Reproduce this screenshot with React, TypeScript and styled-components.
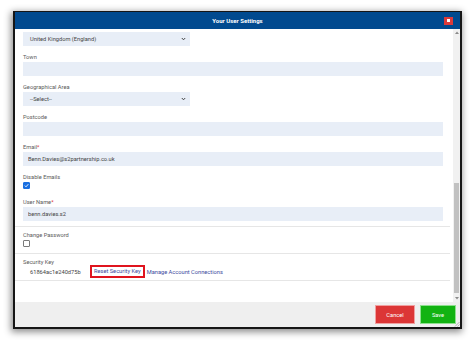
import React from 'react'
import styled, { createGlobalStyle } from 'styled-components'

const GlobalStyle = createGlobalStyle`
  html, body {
    margin: 0;
    padding: 0;
    background: #fff;
  }
  body {
    font-family: Roboto, 'Liberation Sans', Arial, sans-serif;
  }
`

const Page = styled.div`
  width: 474px;
  height: 342px;
  padding: 11px 0 0 13px;
  box-sizing: border-box;
`

const Dialog = styled.div`
  width: 449px;
  height: 318px;
  box-sizing: border-box;
  border: 2px solid #161616;
  border-top-width: 1px;
  background: #fff;
  display: flex;
  flex-direction: column;
  box-shadow: -1px 2px 7px 1px rgba(0, 0, 0, 0.45);
  position: relative;
`

const Header = styled.div`
  height: 17px;
  flex: none;
  background: #014a8f;
  display: grid;
  grid-template-columns: 1fr auto 1fr;
  align-items: center;
`

const Title = styled.div`
  grid-column: 2;
  color: #fff;
  font-size: 6px;
  font-weight: 700;
`

const CloseButton = styled.button`
  grid-column: 3;
  justify-self: end;
  margin-right: 7px;
  width: 9px;
  height: 8px;
  padding: 0;
  border: none;
  background: #dc3a3a;
  display: flex;
  align-items: center;
  justify-content: center;
`

const Body = styled.div`
  flex: 1;
  min-height: 0;
  display: flex;
`

const Scroller = styled.div`
  flex: 1;
  overflow: hidden;
  margin-right: 3px;
`

const Section = styled.div<{ $pad: string }>`
  display: flex;
  flex-direction: column;
  gap: 7px;
  padding: ${({ $pad }) => $pad};
  border-bottom: 1px solid #e6e6e6;
`

const Field = styled.div<{ $after?: number }>`
  display: flex;
  flex-direction: column;
  padding: 0 7px 0 8px;
  margin-bottom: ${({ $after }) => $after || 0}px;
`

const Label = styled.div`
  font-size: 5.7px;
  line-height: 8px;
  height: 8px;
  color: #5a5a5a;
  margin-bottom: 1px;
`

const Required = styled.span`
  color: #e03030;
`

const TextInput = styled.input`
  height: 14px;
  box-sizing: border-box;
  border: none;
  outline: none;
  background: #e8eef7;
  font-family: inherit;
  font-size: 5.7px;
  color: #444;
  padding: 0 5px;
  margin: 0;
  width: 100%;
`

const SelectBox = styled.div`
  width: 167px;
  height: 14px;
  box-sizing: border-box;
  background: #e8eef7;
  display: flex;
  align-items: center;
  justify-content: space-between;
  padding: 0 4px 0 7px;
  font-size: 5.7px;
  color: #444;
`

const Check = styled.div<{ $checked?: boolean }>`
  width: 7px;
  height: 7px;
  box-sizing: border-box;
  border-radius: 1px;
  border: 1px solid ${({ $checked }) => ($checked ? '#1a6fe0' : '#7a7a7a')};
  background: ${({ $checked }) => ($checked ? '#1a6fe0' : '#fff')};
  display: flex;
  align-items: center;
  justify-content: center;
`

const KeyRow = styled.div`
  display: flex;
  align-items: center;
  font-size: 5.7px;
  height: 9px;
`

const KeyValue = styled.span`
  color: #444;
  padding-left: 7px;
  width: 62px;
`

const Link = styled.a<{ $marked?: boolean }>`
  color: #3d4a9e;
  text-decoration: none;
  padding: ${({ $marked }) => ($marked ? '1px 2px 2px' : '0')};
  outline: ${({ $marked }) => ($marked ? '2px solid #e0141e' : 'none')};
  margin-right: ${({ $marked }) => ($marked ? '4px' : '0')};
`

const Scrollbar = styled.div`
  width: 7px;
  flex: none;
  background: #f1f1f1;
  display: flex;
  flex-direction: column;
  align-items: center;
`

const Arrow = styled.div`
  height: 7px;
  flex: none;
  display: flex;
  align-items: center;
  justify-content: center;
`

const Track = styled.div`
  flex: 1;
  width: 100%;
  display: flex;
  flex-direction: column;
  justify-content: flex-end;
`

const Thumb = styled.div`
  height: 110px;
  margin: 0 1px 2px;
  background: #c1c1c1;
`

const Footer = styled.div`
  height: 25px;
  flex: none;
  background: #efefef;
  display: flex;
  justify-content: flex-end;
  align-items: center;
  gap: 5px;
  padding-right: 4px;
`

const ActionButton = styled.button<{ $tone: 'cancel' | 'save' }>`
  height: 19px;
  width: ${({ $tone }) => ($tone === 'cancel' ? '40px' : '36px')};
  border: 1px solid ${({ $tone }) => ($tone === 'cancel' ? '#f0a0a0' : '#8ee08e')};
  background: ${({ $tone }) => ($tone === 'cancel' ? '#dc3636' : '#12b312')};
  color: #fff;
  font-family: inherit;
  font-size: 5.7px;
  padding: 0;
`

const Grip = styled.svg`
  position: absolute;
  right: 0;
  bottom: 0;
`

const Chevron = () => (
  <svg width="5" height="4" viewBox="0 0 5 4">
    <path d="M0.8 1 L2.5 2.8 L4.2 1" stroke="#333" strokeWidth="0.9" fill="none" />
  </svg>
)

const TinyArrow = ({ up }: { up?: boolean }) => (
  <svg width="4" height="3" viewBox="0 0 4 3">
    <path d={up ? 'M0 3 L2 0.5 L4 3 Z' : 'M0 0 L2 2.5 L4 0 Z'} fill="#8a8a8a" />
  </svg>
)

export default function App() {
  return (
    <Page>
      <GlobalStyle />
      <Dialog>
        <Header>
          <Title>Your User Settings</Title>
          <CloseButton aria-label="Close">
            <svg width="3" height="3" viewBox="0 0 3 3">
              <rect width="3" height="3" fill="#fff" />
            </svg>
          </CloseButton>
        </Header>
        <Body>
          <Scroller>
            <Section $pad="3px 0 5px">
              <Field>
                <SelectBox>
                  United Kingdom (England)
                  <Chevron />
                </SelectBox>
              </Field>
              <Field>
                <Label>Town</Label>
                <TextInput readOnly defaultValue="" />
              </Field>
              <Field>
                <Label>Geographical Area</Label>
                <SelectBox>
                  --Select--
                  <Chevron />
                </SelectBox>
              </Field>
              <Field>
                <Label>Postcode</Label>
                <TextInput readOnly defaultValue="" />
              </Field>
              <Field>
                <Label>
                  Email<Required>*</Required>
                </Label>
                <TextInput readOnly defaultValue="Benn.Davies@s2partnership.co.uk" />
              </Field>
              <Field $after={2}>
                <Label>Disable Emails</Label>
                <Check $checked>
                  <svg width="5" height="5" viewBox="0 0 5 5">
                    <path d="M0.8 2.6 L2 3.8 L4.3 1.2" stroke="#fff" strokeWidth="0.9" fill="none" />
                  </svg>
                </Check>
              </Field>
              <Field>
                <Label>
                  User Name<Required>*</Required>
                </Label>
                <TextInput readOnly defaultValue="benn.davies.s2" />
              </Field>
            </Section>
            <Section $pad="4px 0 6px">
              <Field>
                <Label>Change Password</Label>
                <Check />
              </Field>
            </Section>
            <Section $pad="4px 0 4px">
              <Field>
                <Label>Security Key</Label>
                <KeyRow>
                  <KeyValue>61864ac1e240d75b</KeyValue>
                  <Link href="#" $marked>
                    Reset Security Key
                  </Link>
                  <Link href="#">Manage Account Connections</Link>
                </KeyRow>
              </Field>
            </Section>
          </Scroller>
          <Scrollbar>
            <Arrow>
              <TinyArrow up />
            </Arrow>
            <Track>
              <Thumb />
            </Track>
            <Arrow>
              <TinyArrow />
            </Arrow>
          </Scrollbar>
        </Body>
        <Footer>
          <ActionButton $tone="cancel">Cancel</ActionButton>
          <ActionButton $tone="save">Save</ActionButton>
        </Footer>
        <Grip width="6" height="6" viewBox="0 0 6 6">
          <path d="M5.5 1 L1 5.5 M5.5 3.5 L3.5 5.5" stroke="#999" strokeWidth="0.7" />
        </Grip>
      </Dialog>
    </Page>
  )
}
